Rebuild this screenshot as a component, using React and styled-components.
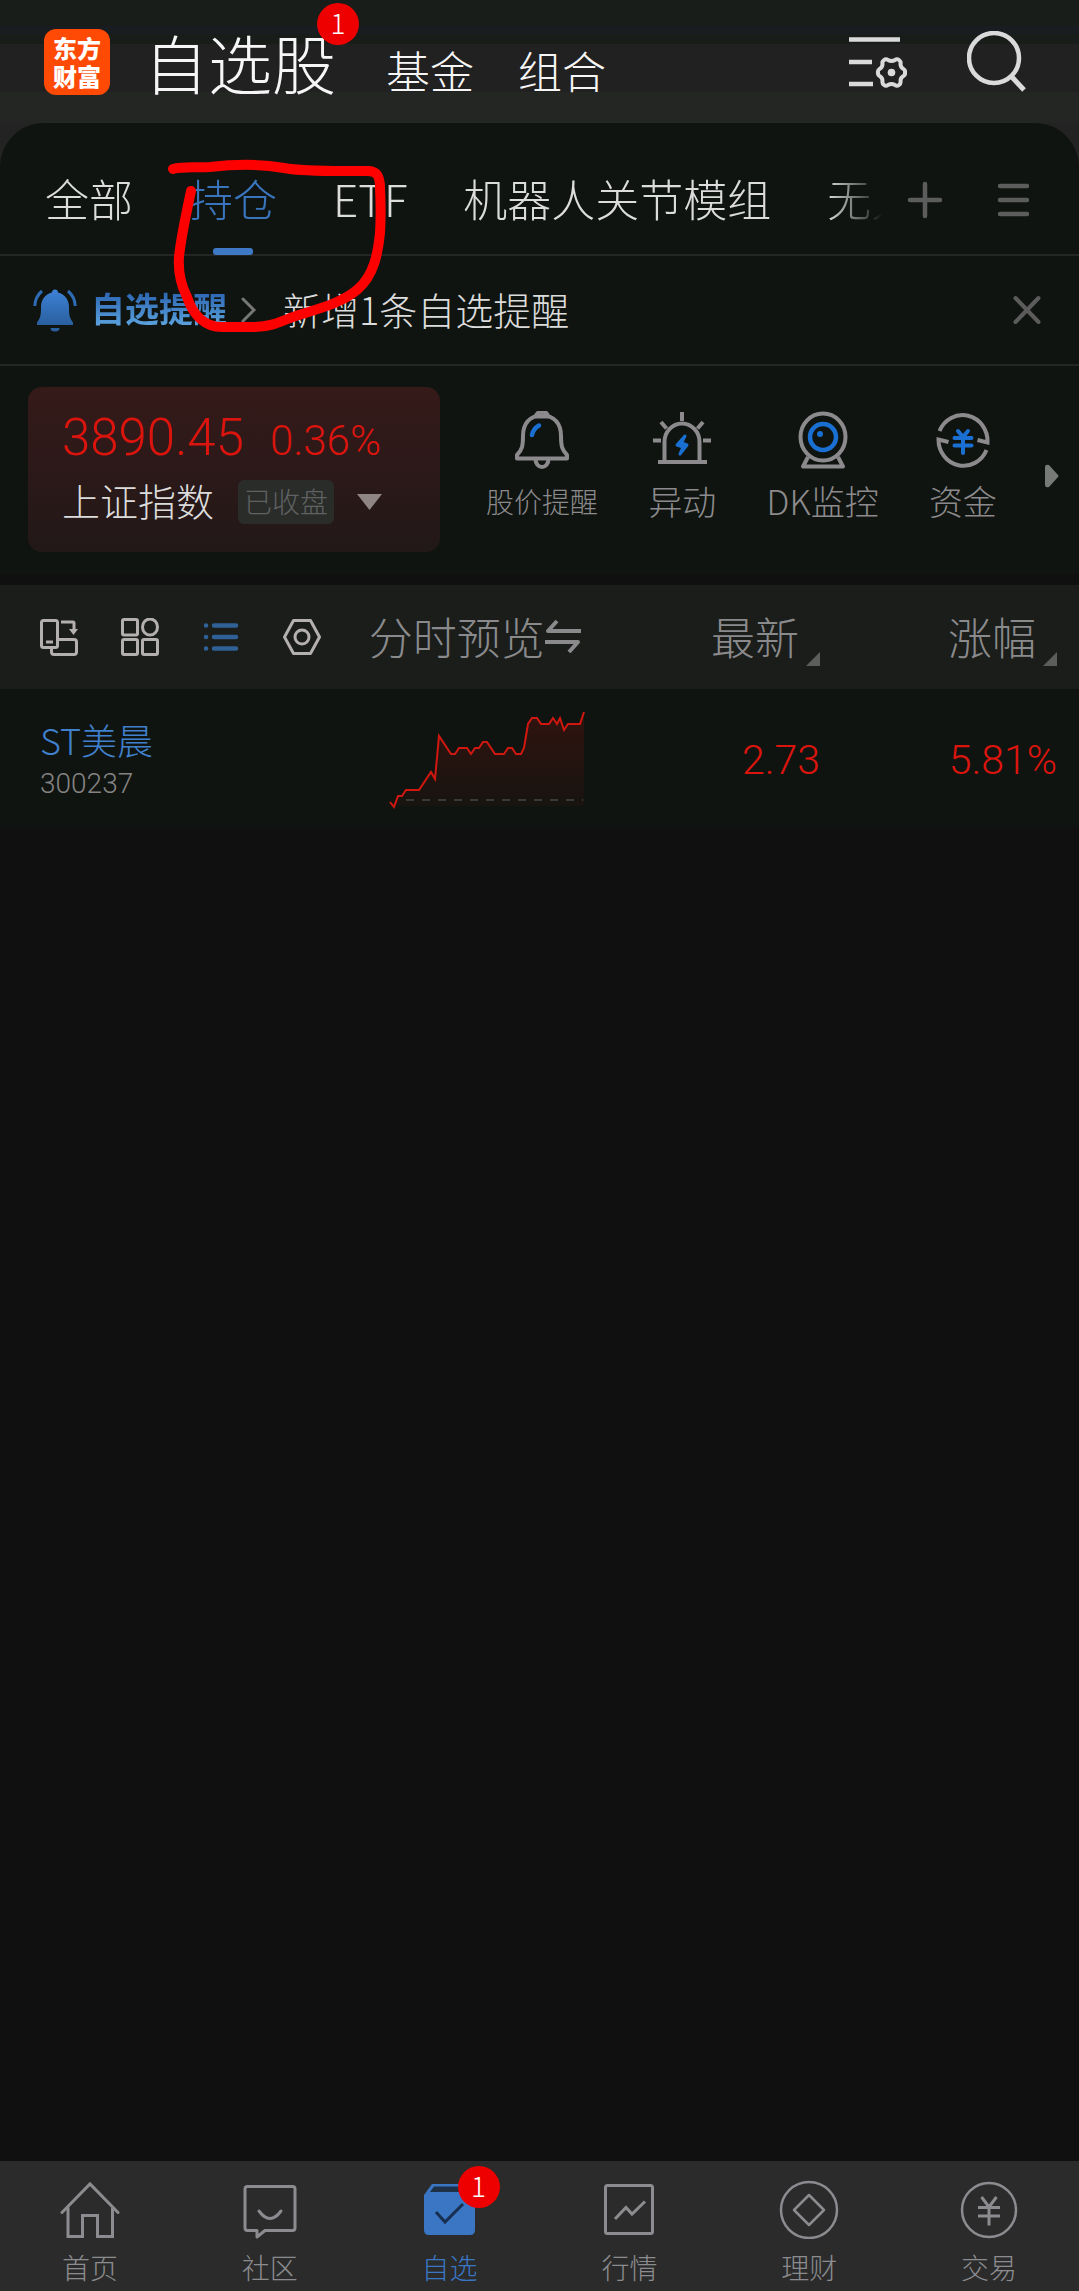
import React from "react";
import styled, { createGlobalStyle, css } from "styled-components";

const c = {
  panel: "#0f1410",
  page: "#101010",
  line: "#232623",
  text: "#dcdcdc",
  muted: "#8a8a8c",
  dim: "#5c5c5c",
  blue: "#3a74bd",
  red: "#dc140e",
};

const Global = createGlobalStyle`
  * { box-sizing: border-box; }
  body {
    margin: 0;
    background: ${c.page};
    color: ${c.text};
    font-family: "Noto Sans CJK SC Light", "Noto Sans CJK SC", "Noto Sans", sans-serif;
    font-weight: 300;
  }
  button {
    border: 0;
    padding: 0;
    background: none;
    color: inherit;
    font: inherit;
    cursor: pointer;
  }
  a { color: inherit; text-decoration: none; }
  svg { display: block; flex: none; }
`;

const Screen = styled.div`
  display: flex;
  flex-direction: column;
  min-height: 100vh;
  background: ${c.page};
`;

/* ---------- header ---------- */

const Header = styled.header`
  display: flex;
  align-items: center;
  height: 123px;
  padding: 0 52px 0 44px;
  background: linear-gradient(
    #191d19 0 26px,
    #191c21 26px 34px,
    #191d19 34px 44px,
    #212121 44px 92px,
    #232623 92px
  );
`;

const Logo = styled.a`
  display: grid;
  place-content: center;
  width: 66px;
  height: 66px;
  margin-right: 34px;
  border-radius: 12px;
  background: #ff4a05;
  color: #fff;
  font-family: "Noto Sans CJK SC", sans-serif;
  font-size: 24px;
  font-weight: 900;
  line-height: 28px;
  text-align: center;
`;

const Sections = styled.nav`
  display: flex;
  align-items: baseline;
  gap: 44px;
  padding-top: 8px;
  color: #f6f6f6;
`;

const SectionButton = styled.button`
  position: relative;
  font-size: ${(p) => (p.$current ? 64 : 44)}px;
  line-height: 80px;
  margin-right: ${(p) => (p.$current ? 6 : 0)}px;
`;

const Badge = styled.span`
  position: absolute;
  top: ${(p) => p.$top}px;
  left: ${(p) => p.$left};
  width: 42px;
  height: 42px;
  border-radius: 50%;
  background: #ee0000;
  color: #fff;
  font-size: 28px;
  line-height: 38px;
  text-align: center;
`;

const HeaderTools = styled.div`
  display: flex;
  align-items: center;
  gap: 60px;
  margin-left: auto;
  color: #dadada;
`;

/* ---------- panel ---------- */

const PanelBack = styled.div`
  background: #232323;
`;

const Panel = styled.section`
  position: relative;
  border-radius: 44px 44px 0 0;
  background: ${c.panel};
`;

const GroupBar = styled.div`
  display: flex;
  align-items: center;
  height: 133px;
  padding: 0 49px 0 45px;
  border-bottom: 2px solid ${c.line};
`;

const GroupList = styled.nav`
  display: flex;
  flex: 1;
  gap: 56px;
  min-width: 0;
  height: 132px;
  overflow: hidden;
  white-space: nowrap;
  mask-image: linear-gradient(to right, #000 calc(100% - 56px), transparent);
`;

const GroupTab = styled.button`
  position: relative;
  flex: none;
  height: 132px;
  padding-top: 18px;
  font-size: 44px;
  line-height: 64px;
  color: ${(p) => (p.$active ? c.blue : c.text)};

  ${(p) =>
    p.$active &&
    css`
      &::after {
        content: "";
        position: absolute;
        left: calc(50% - 20px);
        bottom: 0;
        width: 40px;
        height: 7px;
        border-radius: 3px;
        background: #3d79c4;
      }
    `}
`;

const GroupTools = styled.div`
  display: flex;
  align-items: center;
  gap: 54px;
  margin-left: 24px;
  padding-top: 22px;
  color: ${c.dim};
`;

const Notice = styled.div`
  display: flex;
  align-items: center;
  height: 110px;
  padding: 0 38px 0 33px;
  border-bottom: 2px solid ${c.line};
`;

const NoticeTitle = styled.a`
  display: flex;
  align-items: center;
  gap: 14px;
  color: #777;
`;

const NoticeName = styled.strong`
  padding-bottom: 4px;
  font-family: "Noto Sans CJK SC", sans-serif;
  font-size: 34px;
  font-weight: 700;
  line-height: 48px;
  color: transparent;
  background: linear-gradient(#2f69b4 20%, #5aa2de 80%);
  background-clip: text;
`;

const NoticeText = styled.span`
  flex: 1;
  margin-left: 26px;
  padding-bottom: 2px;
  font-size: 38px;
  line-height: 48px;
`;

const CloseButton = styled.button`
  color: ${c.dim};
`;

const Overview = styled.div`
  display: flex;
  align-items: center;
  padding: 21px 0 22px 28px;
`;

const IndexCard = styled.button`
  display: flex;
  flex-direction: column;
  width: 412px;
  height: 165px;
  padding: 16px 34px 0;
  border-radius: 14px;
  background: linear-gradient(#351a19, #221818);
  text-align: left;
`;

const Quote = styled.span`
  display: flex;
  align-items: baseline;
  gap: 26px;
  font-family: Roboto, "Noto Sans CJK SC", sans-serif;
  font-size: 51px;
  line-height: 70px;
  color: ${c.red};
`;

const QuoteChange = styled.span`
  font-size: 42px;
`;

const IndexLine = styled.span`
  display: flex;
  align-items: center;
  height: 52px;
  font-size: 38px;
  line-height: 48px;
`;

const IndexName = styled.span`
  padding-bottom: 4px;
`;

const ClosedTag = styled.span`
  margin: 0 22px 0 24px;
  padding: 0 6px 2px;
  border-radius: 6px;
  background: #2a2c2a;
  color: #606262;
  font-size: 28px;
  line-height: 42px;
`;

const Shortcuts = styled.nav`
  display: grid;
  grid-template-columns: repeat(4, 1fr);
  flex: 1;
  margin-left: 32px;
`;

const Shortcut = styled.a`
  display: flex;
  flex-direction: column;
  align-items: center;
  gap: 6px;
  padding-bottom: 2px;
  color: #8c8a8c;
  font-size: ${(p) => (p.$small ? 28 : 34)}px;
  line-height: 52px;
  white-space: nowrap;
`;

const MoreButton = styled.button`
  padding: 12px 20px 0 12px;
  color: #777a77;
`;

/* ---------- stock table ---------- */

const StockTable = styled.table`
  width: 100%;
  margin-top: 11px;
  border-collapse: collapse;
  table-layout: fixed;
`;

const HeadRow = styled.tr`
  height: 104px;
  background: #1a1d1a;
  color: ${c.muted};
`;

const HeadCell = styled.th`
  width: ${(p) => p.$width};
  padding: 0 ${(p) => p.$end || 0}px 0 ${(p) => p.$start || 0}px;
  font-size: 44px;
  font-weight: 300;
  line-height: 64px;
  text-align: ${(p) => p.$align || "left"};
`;

const ViewTools = styled.div`
  display: flex;
  gap: 43px;
  color: #b4b0b0;
`;

const ViewButton = styled.button`
  color: ${(p) => (p.$active ? "#2f6096" : "inherit")};
`;

const HeadButton = styled.button`
  display: flex;
  align-items: center;
  height: 64px;
  margin-left: ${(p) => (p.$end ? "auto" : 0)};
  padding-bottom: 3px;
  white-space: nowrap;
`;

const SortMark = styled.svg`
  align-self: flex-end;
  margin-left: 7px;
`;

const StockRow = styled.tr`
  height: 138px;
  background: ${c.panel};
`;

const NameCell = styled.td`
  padding: 8px 0 0 40px;
`;

const StockName = styled.a`
  display: block;
  font-size: 36px;
  line-height: 44px;
  color: #4080cc;
`;

const StockCode = styled.span`
  display: block;
  font-family: Roboto, sans-serif;
  font-size: 28px;
  line-height: 46px;
  color: #858383;
`;

const ChartCell = styled.td`
  padding: 2px 0 0 38px;
`;

const NumberCell = styled.td`
  padding: 4px ${(p) => p.$end || 0}px 0 0;
  font-family: Roboto, sans-serif;
  font-size: 41px;
  text-align: right;
  color: ${c.red};
`;

/* ---------- bottom navigation ---------- */

const BottomNav = styled.nav`
  display: grid;
  grid-template-columns: repeat(6, 1fr);
  height: 130px;
  margin-top: auto;
  background: #2a2b2a;
`;

const BottomLink = styled.a`
  position: relative;
  display: flex;
  flex-direction: column;
  align-items: center;
  gap: 6px;
  padding-top: 18px;
  color: ${(p) => (p.$active ? "#3a76c4" : "#8c8b90")};
  font-size: 28px;
  line-height: 44px;
`;

/* Freehand marker stroke laid over the group tabs. */
const Marker = styled.svg`
  position: absolute;
  top: 0;
  left: 0;
  pointer-events: none;
`;

/* ---------- icons ---------- */

const Icon = ({ w, h, sw = 4, children, ...rest }) => (
  <svg
    width={w}
    height={h}
    viewBox={`0 0 ${w} ${h}`}
    fill="none"
    stroke="currentColor"
    strokeWidth={sw}
    aria-hidden="true"
    {...rest}
  >
    {children}
  </svg>
);

const SettingsListIcon = () => (
  <Icon w={58} h={60} sw={4.5}>
    <path d="M0 7.500H51M0 30H23M0 52H24" />
    <path
      strokeWidth="4"
      strokeLinejoin="round"
      d="M35 28Q37 26.500 39 28Q42.500 30 46 28Q48 26.500 50 28Q52 29.500 51.500 32Q51.500 35.500 54.500 37Q56.500 38.500 56 40.500Q56.500 42.500 54.500 44Q51.500 45.500 51.500 49Q52 51.500 50 53Q48 54.500 46 53Q42.500 51 39 53Q37 54.500 35 53Q33 51.500 33.500 49Q33.500 45.500 30.500 44Q28.500 42.500 29 40.500Q28.500 38.500 30.500 37Q33.500 35.500 33.500 32Q33 29.500 35 28Z"
    />
    <circle cx="42.500" cy="40.500" r="3.800" fill="currentColor" stroke="none" />
  </Icon>
);

const SearchIcon = () => (
  <Icon w={60} h={62} sw={4.5}>
    <circle cx="27" cy="27" r="25" />
    <path d="M44 45L57 59" strokeWidth="5" />
  </Icon>
);

const PlusIcon = () => (
  <Icon w={36} h={38} sw={4.5} strokeLinecap="round">
    <path d="M18 3V35M3 19H33" />
  </Icon>
);

const MenuIcon = () => (
  <Icon w={33} h={38} sw={4.5} strokeLinecap="round">
    <path d="M3 5H30M3 19H30M3 33H30" />
  </Icon>
);

const AlertBellIcon = () => (
  <Icon w={44} h={44} sw={3}>
    <defs>
      <linearGradient id="bellFill" x1="0" y1="0" x2="0" y2="1">
        <stop offset="0" stopColor="#3d82d6" />
        <stop offset="1" stopColor="#2a5f9f" />
      </linearGradient>
    </defs>
    <path
      fill="url(#bellFill)"
      stroke="none"
      d="M22 1.500c1.800 0 3 1.200 3 3C32 6 36 12 36 19c0 8 .5 11 4 15.500V37H4v-2.500C7.500 30 8 27 8 19 8 12 12 6 19 4.500c0-1.800 1.200-3 3-3Z"
    />
    <path fill="#2a5f9f" stroke="none" d="M17.500 40h9a4.500 3.500 0 0 1-9 0Z" />
    <path stroke="#2f6cb5" d="M9 3Q2 9 1.800 18M35 3Q42 9 42.200 18" />
  </Icon>
);

const ChevronIcon = () => (
  <Icon w={16} h={26} sw={3} strokeLinecap="round">
    <path d="M2 2L13 13L2 24" />
  </Icon>
);

const CloseIcon = () => (
  <Icon w={28} h={30} sw={4} strokeLinecap="round">
    <path d="M2.500 3L25.500 27M25.500 3L2.500 27" />
  </Icon>
);

const DownIcon = () => (
  <Icon w={27} h={18}>
    <path fill="#8f8585" stroke="none" d="M1 1H26L13.500 17Z" />
  </Icon>
);

const PriceBellIcon = () => (
  <Icon w={58} h={58} strokeLinejoin="round">
    <path d="M29 4C16 5 10 13 10 25C10 35 9 39 4 44V47.500H54V44C49 39 48 35 48 25C48 13 42 5 29 4Z" />
    <path d="M23 5.500a6 5 0 0 1 12 0ZM22.500 48a6.500 8 0 0 0 13 0" />
    <path stroke="#1a70d2" strokeLinecap="round" strokeWidth="4.500" d="M19 24Q20 18 26 14.500" />
  </Icon>
);

const SirenIcon = () => (
  <Icon w={58} h={58}>
    <path d="M11.500 50V31a17.500 18.500 0 0 1 35 0V50M5 51H54" />
    <path d="M29 1V10M8 11L13.500 17.500M50 11L44.500 17.500M0 29.500H8M50 29.500H58" />
    <path
      fill="#1a70d2"
      stroke="#1a70d2"
      strokeWidth="3"
      strokeLinejoin="round"
      d="M32 25L24 34L30 36L27 43L34 34L28.500 32Z"
    />
  </Icon>
);

const CameraIcon = () => (
  <Icon w={58} h={58}>
    <ellipse cx="29" cy="26" rx="22.500" ry="23.500" />
    <path d="M14 46L9 55.500H49L44 46" strokeLinejoin="round" />
    <circle cx="29" cy="26" r="13" stroke="#1a70d2" strokeWidth="4.500" />
    <circle cx="26" cy="23" r="3" fill="#1a70d2" stroke="none" />
  </Icon>
);

const FundIcon = () => (
  <Icon w={58} h={58}>
    <path d="M5.500 20A25 26 0 0 1 53.500 31.500L43.500 29" />
    <path d="M52.500 39A25 26 0 0 1 4.500 28.500L14.500 31" />
    <path
      stroke="#1a70d2"
      strokeLinecap="round"
      d="M24 20L29 26L34 20M20.500 27H37.500M20.500 34.500H37.500M29 27V42"
    />
  </Icon>
);

const MoreIcon = () => (
  <Icon w={14} h={24}>
    <path fill="currentColor" stroke="none" d="M0 3Q0 0 4 1L13 11Q14 12 13 13L4 23Q0 24 0 21Z" />
  </Icon>
);

const RotateIcon = () => (
  <Icon w={38} h={38} sw={3}>
    <rect x="1.500" y="2.500" width="16" height="27" rx="2" />
    <path d="M6 24H13M19 21.500H34Q36.500 21.500 36.500 24V34Q36.500 36.500 34 36.500H14Q11.500 36.500 11.500 34V30M21 4H33Q34 4 34 5V13" />
    <path fill="currentColor" stroke="none" d="M29 11H38L33.500 17Z" />
  </Icon>
);

const GridIcon = () => (
  <Icon w={38} h={38} sw={3}>
    <rect x="1.500" y="1.500" width="15" height="15.500" rx="1.500" />
    <ellipse cx="29" cy="9" rx="7.500" ry="8" />
    <rect x="1.500" y="21.500" width="15" height="15" rx="1.500" />
    <rect x="21.500" y="21.500" width="15" height="15" rx="1.500" />
  </Icon>
);

const ListIcon = () => (
  <Icon w={38} h={38} sw={4.5} strokeLinecap="round">
    <path d="M4 7.500h.1M4 19h.1M4 30.500h.1M12 7.500H34M12 19H34M12 30.500H34" />
  </Icon>
);

const HexIcon = () => (
  <Icon w={38} h={38} sw={3} strokeLinejoin="round">
    <path d="M10.500 2.500H27.500L36.500 19L27.500 35.500H10.500L1.500 19Z" />
    <circle cx="19" cy="19" r="7" />
  </Icon>
);

const SwapIcon = () => (
  <Icon w={36} h={34} sw={4} strokeLinejoin="round">
    <path d="M36 12H3L12 2M0 23H33L24 33" />
  </Icon>
);

const SortTriangle = () => (
  <SortMark width="14" height="14" viewBox="0 0 14 14" aria-hidden="true">
    <path d="M14 0V14H0Z" fill="#5c5e5c" />
  </SortMark>
);

const linePoints =
  "1,93 5,98 9,87 13,87 17,81 30,81 42,63 46,70 50,27 62,45 66,45 70,39 78,39 82,45 86,39 90,39 94,33 98,33 106,45 115,45 119,39 123,39 127,45 132,45 135,39 139,15 143,9 148,9 152,15 160,15 164,9 168,15 171,9 175,21 179,15 191,15 195,3";

const TrendChart = () => (
  <svg width="196" height="100" viewBox="0 0 196 100" role="img" aria-label="分时走势">
    <defs>
      <linearGradient id="trendFill" x1="0" y1="0" x2="0" y2="1">
        <stop offset="0" stopColor="#e01008" stopOpacity="0.160" />
        <stop offset="1" stopColor="#e01008" stopOpacity="0.040" />
      </linearGradient>
    </defs>
    <polygon points={`${linePoints} 195,97 1,97`} fill="url(#trendFill)" />
    <path d="M17 91H194" stroke="#3a3c3a" strokeWidth="2" strokeDasharray="8 8" />
    <polyline points={linePoints} fill="none" stroke="#d01810" strokeWidth="2" />
  </svg>
);

const HomeIcon = () => (
  <Icon w={60} h={60} sw={3} strokeLinecap="round">
    <path d="M2 33.500L30 5L58 33.500M8 29V57.500H22.500V36.500H37.500V57.500H52.500V29" />
  </Icon>
);

const CommunityIcon = () => (
  <Icon w={60} h={60} sw={3} strokeLinejoin="round">
    <path d="M7.500 7.500H52.500Q55 7.500 55 10V49Q55 51.500 52.500 51.500H25L17 58V51.500H7.500Q5 51.500 5 49V10Q5 7.500 7.500 7.500Z" />
    <path d="M19 32Q30 47 41 32" strokeLinecap="round" />
  </Icon>
);

const WatchIcon = () => (
  <Icon w={60} h={60}>
    <path fill="currentColor" stroke="none" d="M4 16L12 5H48L55 16V51Q55 56 50 56H9Q4 56 4 51Z" />
    <path fill="#1f3146" stroke="none" d="M10 13L14 7.500H46L50 13Z" />
    <path stroke="#17304f" strokeWidth="3" d="M16 33L25 43L43 25" />
  </Icon>
);

const MarketIcon = () => (
  <Icon w={60} h={60} sw={3}>
    <rect x="6.500" y="6.500" width="47" height="48" rx="2" />
    <path d="M16 40L27 28.500L33 35L46 22.500" />
  </Icon>
);

const WealthIcon = () => (
  <Icon w={60} h={60} sw={2.5} strokeLinejoin="round">
    <circle cx="30" cy="31" r="28" />
    <path d="M30 16L45 31L30 46L15 31Z" />
  </Icon>
);

const TradeIcon = () => (
  <Icon w={60} h={60} sw={3}>
    <circle cx="30" cy="31" r="27" strokeWidth="2.500" />
    <path d="M22.500 18L30 28L37.500 18M19 28.500H41M19 37H41M30 28V46.500" />
  </Icon>
);

/* ---------- data ---------- */

const groups = ["全部", "持仓", "ETF", "机器人关节模组", "无人"];

const shortcuts = [
  { label: "股价提醒", Glyph: PriceBellIcon, small: true },
  { label: "异动", Glyph: SirenIcon },
  { label: "DK监控", Glyph: CameraIcon },
  { label: "资金", Glyph: FundIcon },
];

const views = [
  { label: "横屏", Glyph: RotateIcon },
  { label: "宫格", Glyph: GridIcon },
  { label: "列表", Glyph: ListIcon },
  { label: "设置", Glyph: HexIcon },
];

const stocks = [{ name: "ST美晨", code: "300237", price: "2.73", change: "5.81%" }];

const links = [
  { label: "首页", Glyph: HomeIcon },
  { label: "社区", Glyph: CommunityIcon },
  { label: "自选", Glyph: WatchIcon, badge: "1" },
  { label: "行情", Glyph: MarketIcon },
  { label: "理财", Glyph: WealthIcon },
  { label: "交易", Glyph: TradeIcon },
];

export default function App() {
  return (
    <Screen>
      <Global />
      <Header>
        <Logo href="#home">
          <span>东方</span>
          <span>财富</span>
        </Logo>
        <Sections>
          <SectionButton $current>
            自选股
            <Badge $top={-18} $left="calc(100% - 19px)">1</Badge>
          </SectionButton>
          <SectionButton>基金</SectionButton>
          <SectionButton>组合</SectionButton>
        </Sections>
        <HeaderTools>
          <button aria-label="管理"><SettingsListIcon /></button>
          <button aria-label="搜索"><SearchIcon /></button>
        </HeaderTools>
      </Header>

      <PanelBack>
        <Panel>
          <GroupBar>
            <GroupList>
              {groups.map((name) => (
                <GroupTab key={name} $active={name === "持仓"}>{name}</GroupTab>
              ))}
            </GroupList>
            <GroupTools>
              <button aria-label="添加"><PlusIcon /></button>
              <button aria-label="菜单"><MenuIcon /></button>
            </GroupTools>
          </GroupBar>

          <Notice>
            <NoticeTitle href="#alerts">
              <AlertBellIcon />
              <NoticeName>自选提醒</NoticeName>
              <ChevronIcon />
            </NoticeTitle>
            <NoticeText>新增1条自选提醒</NoticeText>
            <CloseButton aria-label="关闭"><CloseIcon /></CloseButton>
          </Notice>

          <Overview>
            <IndexCard>
              <Quote>
                3890.45
                <QuoteChange>0.36%</QuoteChange>
              </Quote>
              <IndexLine>
                <IndexName>上证指数</IndexName>
                <ClosedTag>已收盘</ClosedTag>
                <DownIcon />
              </IndexLine>
            </IndexCard>
            <Shortcuts>
              {shortcuts.map(({ label, Glyph, small }) => (
                <Shortcut key={label} href="#tool" $small={small}>
                  <Glyph />
                  {label}
                </Shortcut>
              ))}
            </Shortcuts>
            <MoreButton aria-label="更多"><MoreIcon /></MoreButton>
          </Overview>

          <Marker width="400" height="220" viewBox="0 0 400 220" fill="none" aria-hidden="true">
            <path
              d="M173 46C184 43 196 45 210 44C236 41 262 41 284 45C306 49 335 48 368 48C377 48 380 53 380 65C381 85 381 95 380 110C378 130 374 152 358 166C340 182 312 187 290 195C278 200 268 204 255 204H222C205 204 193 192 187 174C180 160 178 148 179 134C181 114 186 92 191 68"
              stroke="#ff0000"
              strokeWidth="10"
              strokeLinecap="round"
            />
          </Marker>
        </Panel>
      </PanelBack>

      <StockTable>
        <thead>
          <HeadRow>
            <HeadCell $width="32.5%" $start={40}>
              <ViewTools>
                {views.map(({ label, Glyph }) => (
                  <ViewButton key={label} aria-label={label} $active={label === "列表"}>
                    <Glyph />
                  </ViewButton>
                ))}
              </ViewTools>
            </HeadCell>
            <HeadCell $width="22%" $start={18}>
              <HeadButton>分时预览<SwapIcon /></HeadButton>
            </HeadCell>
            <HeadCell $width="21.5%">
              <HeadButton $end>最新<SortTriangle /></HeadButton>
            </HeadCell>
            <HeadCell $width="24%" $end={22}>
              <HeadButton $end>涨幅<SortTriangle /></HeadButton>
            </HeadCell>
          </HeadRow>
        </thead>
        <tbody>
          {stocks.map((s) => (
            <StockRow key={s.code}>
              <NameCell>
                <StockName href="#stock">{s.name}</StockName>
                <StockCode>{s.code}</StockCode>
              </NameCell>
              <ChartCell><TrendChart /></ChartCell>
              <NumberCell>{s.price}</NumberCell>
              <NumberCell $end={22}>{s.change}</NumberCell>
            </StockRow>
          ))}
        </tbody>
      </StockTable>

      <BottomNav>
        {links.map(({ label, Glyph, badge }) => (
          <BottomLink key={label} href="#tab" $active={label === "自选"}>
            <Glyph />
            {label}
            {badge && <Badge $top={5} $left="calc(50% + 8px)">{badge}</Badge>}
          </BottomLink>
        ))}
      </BottomNav>
    </Screen>
  );
}
